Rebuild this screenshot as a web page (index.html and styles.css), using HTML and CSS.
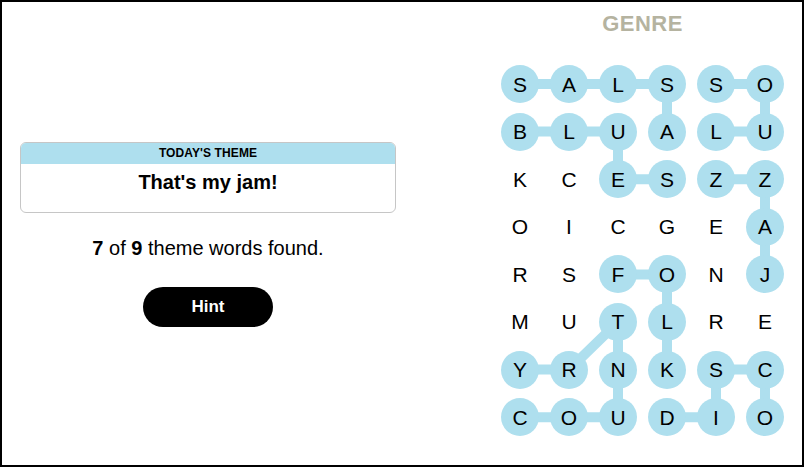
FILE: index.html
```html
<!DOCTYPE html>
<html lang="en">
<head>
<meta charset="utf-8">
<title>Strands</title>
<link rel="stylesheet" href="styles.css">
</head>
<body>
<div class="frame">
  <section class="side">
    <div class="theme-card">
      <div class="theme-head">TODAY'S THEME</div>
      <div class="theme-body">That's my jam!</div>
    </div>
    <p class="status"><b>7</b> of <b>9</b> theme words found.</p>
    <button class="hint">Hint</button>
  </section>
  <section class="board-area">
    <h1 class="genre">GENRE</h1>
    <div class="board">
      <svg class="links" width="283" height="371" viewBox="0 0 283 371" aria-hidden="true">
        <g fill="none" stroke="#aedfee" stroke-width="10" stroke-linejoin="round">
          <polyline points="19,19 166,19 166,66.6"/>
          <polyline points="215,19 264,19 264,66.6 215,66.6"/>
          <polyline points="19,66.6 117,66.6 117,114.2 166,114.2"/>
          <polyline points="215,114.2 264,114.2 264,209.4"/>
          <polyline points="117,209.4 166,209.4 166,304.6"/>
          <polyline points="19,304.6 68,304.6 117,257 117,352.2 19,352.2"/>
          <polyline points="166,352.2 215,352.2 215,304.6 264,304.6 264,352.2"/>
        </g>
      </svg>
      <span class="cell on">S</span><span class="cell on">A</span><span class="cell on">L</span><span class="cell on">S</span><span class="cell on">S</span><span class="cell on">O</span>
      <span class="cell on">B</span><span class="cell on">L</span><span class="cell on">U</span><span class="cell on">A</span><span class="cell on">L</span><span class="cell on">U</span>
      <span class="cell">K</span><span class="cell">C</span><span class="cell on">E</span><span class="cell on">S</span><span class="cell on">Z</span><span class="cell on">Z</span>
      <span class="cell">O</span><span class="cell">I</span><span class="cell">C</span><span class="cell">G</span><span class="cell">E</span><span class="cell on">A</span>
      <span class="cell">R</span><span class="cell">S</span><span class="cell on">F</span><span class="cell on">O</span><span class="cell">N</span><span class="cell on">J</span>
      <span class="cell">M</span><span class="cell">U</span><span class="cell on">T</span><span class="cell on">L</span><span class="cell">R</span><span class="cell">E</span>
      <span class="cell on">Y</span><span class="cell on">R</span><span class="cell on">N</span><span class="cell on">K</span><span class="cell on">S</span><span class="cell on">C</span>
      <span class="cell on">C</span><span class="cell on">O</span><span class="cell on">U</span><span class="cell on">D</span><span class="cell on">I</span><span class="cell on">O</span>
    </div>
  </section>
</div>
</body>
</html>
```

FILE: styles.css
```css
* { box-sizing: border-box; }

html, body {
  margin: 0;
  padding: 0;
  background: #fff;
}

body {
  font-family: "Liberation Sans", Arial, sans-serif;
  color: #000;
}

.frame {
  width: 804px;
  height: 467px;
  border: 2px solid #000;
  display: flex;
}

.side {
  width: 412px;
  display: flex;
  flex-direction: column;
  align-items: center;
  justify-content: center;
  padding-top: 1px;
}

.theme-card {
  width: 376px;
  border: 1px solid #c6c6c6;
  border-radius: 6px;
  overflow: hidden;
}

.theme-head {
  background: #aedfee;
  height: 21px;
  line-height: 21px;
  text-align: center;
  font-size: 12px;
  font-weight: 700;
  letter-spacing: 0.1px;
}

.theme-body {
  text-align: center;
  font-size: 20px;
  font-weight: 700;
  line-height: 24px;
  padding: 6px 0 18px;
}

.status {
  margin: 23px 0 0;
  font-size: 20px;
  line-height: 24px;
}

.status b { font-weight: 700; }

.hint {
  margin-top: 27px;
  width: 130px;
  height: 40px;
  border: none;
  border-radius: 20px;
  background: #000;
  color: #fff;
  font-family: inherit;
  font-size: 17px;
  font-weight: 700;
  padding: 0;
}

.board-area {
  flex: 1;
  display: flex;
  flex-direction: column;
  align-items: flex-end;
  padding: 9px 18px 0 0;
}

.genre {
  margin: 0;
  width: 283px;
  text-align: center;
  font-size: 22px;
  line-height: 26px;
  font-weight: 700;
  color: #b5b3a0;
  letter-spacing: 0.5px;
}

.board {
  position: relative;
  margin-top: 28px;
  display: grid;
  grid-template-columns: repeat(6, 38px);
  grid-auto-rows: 38px;
  column-gap: 11px;
  row-gap: 9.6px;
}

.links {
  position: absolute;
  left: 0;
  top: 0;
  z-index: 0;
}

.cell {
  position: relative;
  z-index: 1;
  width: 38px;
  height: 38px;
  border-radius: 50%;
  display: flex;
  align-items: center;
  justify-content: center;
  font-size: 21px;
  line-height: 1;
}

.cell.on { background: #aedfee; }
```
